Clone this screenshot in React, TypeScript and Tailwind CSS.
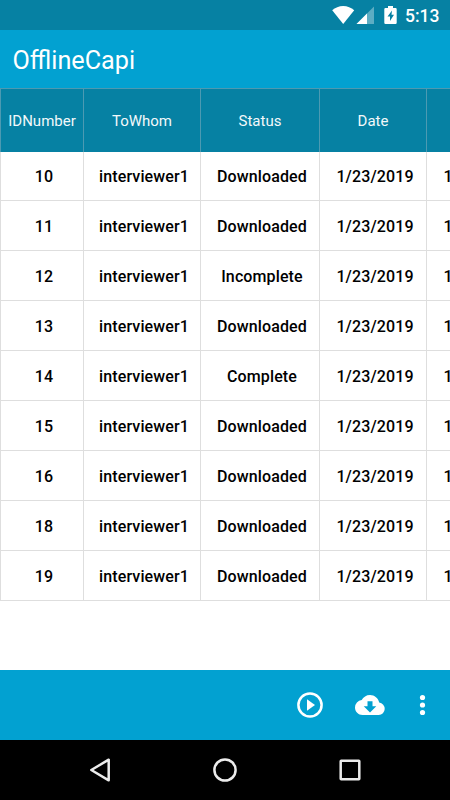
import React from "react";

const rows = [
  ["10", "Downloaded"],
  ["11", "Downloaded"],
  ["12", "Incomplete"],
  ["13", "Downloaded"],
  ["14", "Complete"],
  ["15", "Downloaded"],
  ["16", "Downloaded"],
  ["18", "Downloaded"],
  ["19", "Downloaded"],
];

const columns = "grid grid-cols-[84px_117px_119px_107px_107px] w-[534px]";

function HeaderCell({ children, first = false }: { children?: React.ReactNode; first?: boolean }) {
  return (
    <div
      className={`flex items-center justify-center border-r border-t border-[#4c9ab2] pt-px ${
        first ? "border-l" : ""
      }`}
    >
      {children}
    </div>
  );
}

function Cell({ children, first = false }: { children?: React.ReactNode; first?: boolean }) {
  return (
    <div
      className={`flex items-end justify-center border-b border-r border-[#dedede] pb-[11px] pl-1 leading-6 ${
        first ? "border-l" : ""
      }`}
    >
      {children}
    </div>
  );
}

export default function App() {
  return (
    <div className="flex h-[800px] w-[450px] flex-col overflow-hidden bg-white font-[Roboto,sans-serif]">
      <div className="flex h-[30px] shrink-0 items-center justify-end bg-[#0681a3] pr-[10.500px] text-white">
        <svg className="h-[30px] w-[73.500px]" viewBox="332 0 73.5 30" fill="#fff">
          <path d="M332.2 10.3C335.2 7.6 339 6 343.2 6s8 1.6 11 4.3L343.2 24z" />
          <path d="M374 6.500V24H356.500z" opacity=".35" />
          <path d="M367 13.500V24H356.500z" />
          <path
            fillRule="evenodd"
            d="M388 6h5v2h2.500q1.200 0 1.200 1.200v13.600q0 1.200-1.200 1.200h-10q-1.200 0-1.200-1.200V9.200q0-1.200 1.200-1.200H388zM392 10.500l-4.500 6h2.500v4.500l4-6.200h-2.500z"
          />
        </svg>
        <span className="pt-[2px] text-[17.500px] font-medium leading-[28px]">5:13</span>
      </div>

      <header className="flex h-[58px] shrink-0 items-center bg-[#02a1d1] pl-[12.500px] pt-[4px]">
        <h1 className="text-[25.200px] font-normal leading-8 text-white">OfflineCapi</h1>
      </header>

      <main className="h-[582px] shrink-0 overflow-hidden">
        <div className={`${columns} h-16 bg-[#0681a3] text-[15px] text-[#f2f8fa]`}>
          <HeaderCell first>IDNumber</HeaderCell>
          <HeaderCell>ToWhom</HeaderCell>
          <HeaderCell>Status</HeaderCell>
          <HeaderCell>Date</HeaderCell>
          <HeaderCell />
        </div>
        {rows.map(([id, status]) => (
          <div
            key={id}
            className={`${columns} text-[16px] font-medium tracking-[0.12px] text-black ${id === "10" ? "h-[49px]" : "h-[50px]"}`}
          >
            <Cell first>{id}</Cell>
            <Cell>interviewer1</Cell>
            <Cell>{status}</Cell>
            <Cell>1/23/2019</Cell>
            <Cell>1/23/2019</Cell>
          </div>
        ))}
      </main>

      <div className="flex h-[70px] shrink-0 bg-[#02a1d1]">
        <svg className="ml-[290px] h-[70px] w-[160px]" viewBox="290 670 160 70" fill="#fff">
          <circle cx="310" cy="705" r="11.600" fill="none" stroke="#fff" strokeWidth="2.500" />
          <path d="M307 699.300v11.400l8-5.700z" />
          <path
            fillRule="evenodd"
            d="M379.200 702.550C378.350 698.240 374.550 695 370 695c-3.610 0-6.750 2.050-8.310 5.050A7.500 7.500 0 0 0 355 707.500c0 4.140 3.360 7.500 7.500 7.500h16.250a6.250 6.250 0 0 0 .450-12.450zM376.250 706.250L370 712.500l-6.250-6.250h3.750v-5h5v5z"
          />
          <circle cx="422.500" cy="697.500" r="2.600" />
          <circle cx="422.500" cy="705" r="2.600" />
          <circle cx="422.500" cy="712.500" r="2.600" />
        </svg>
      </div>

      <nav className="h-[60px] shrink-0 bg-black">
        <svg className="h-[60px] w-[450px]" viewBox="0 740 450 60" fill="none" stroke="#ececec" strokeWidth="2.500" strokeLinejoin="round">
          <path d="M108.700 759.700v20.600L91.300 770z" />
          <circle cx="225" cy="770" r="10.600" />
          <rect x="340.700" y="760.700" width="18.600" height="18.600" rx=".5" />
        </svg>
      </nav>
    </div>
  );
}
